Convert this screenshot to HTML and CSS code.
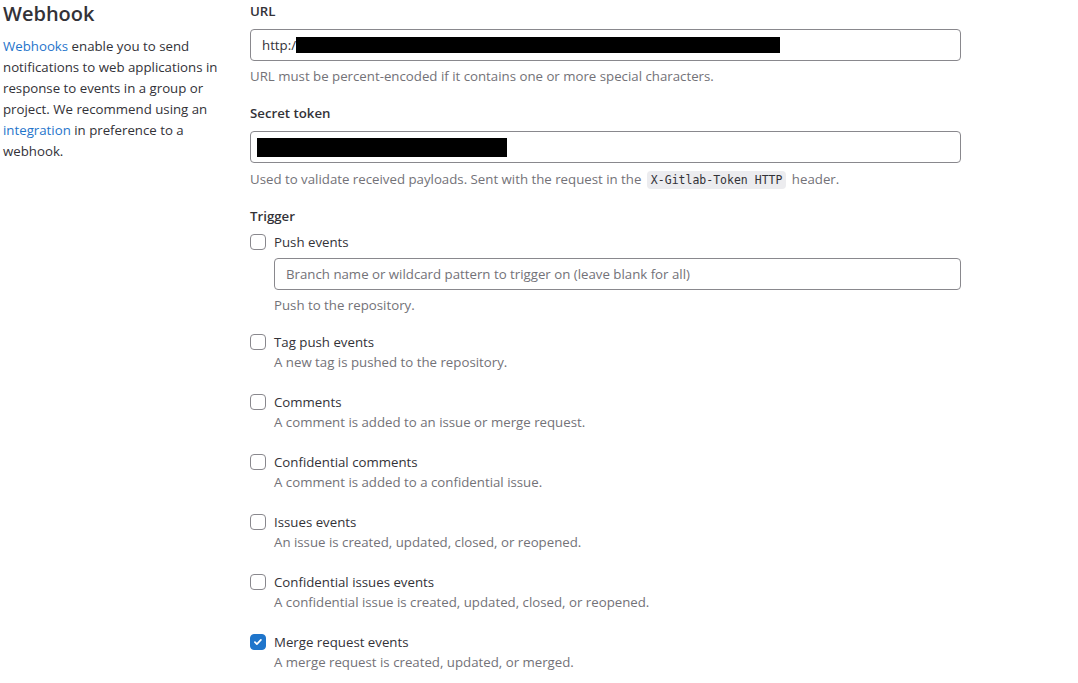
FILE: index.html
```html
<!DOCTYPE html>
<html lang="en">
<head>
<meta charset="utf-8">
<title>Webhook</title>
<link rel="stylesheet" href="styles.css">
</head>
<body>
<div class="page">
  <aside class="intro">
    <h2 class="title">Webhook</h2>
    <p class="desc"><a href="#">Webhooks</a> enable you to send notifications to web applications in response to events in a group or project. We recommend using an <a href="#">integration</a> in preference to a webhook.</p>
  </aside>
  <main class="form">
    <div class="group">
      <label class="label">URL</label>
      <div class="input"><span class="val">http:/</span><span class="redact redact-url"></span></div>
      <p class="help">URL must be percent-encoded if it contains one or more special characters.</p>
    </div>
    <div class="group group-token">
      <label class="label">Secret token</label>
      <div class="input input-secret"><span class="redact redact-token"></span></div>
      <p class="help help-token">Used to validate received payloads. Sent with the request in the <code>X-Gitlab-Token HTTP</code> header.</p>
    </div>
    <div class="group trigger">
      <label class="label">Trigger</label>
      <div class="check first">
        <span class="box"></span>
        <div class="check-body">
          <div class="check-label">Push events</div>
          <div class="input input-branch"><span class="placeholder">Branch name or wildcard pattern to trigger on (leave blank for all)</span></div>
          <p class="help help-push">Push to the repository.</p>
        </div>
      </div>
      <div class="check after-push">
        <span class="box"></span>
        <div class="check-body">
          <div class="check-label">Tag push events</div>
          <div class="check-help">A new tag is pushed to the repository.</div>
        </div>
      </div>
      <div class="check">
        <span class="box"></span>
        <div class="check-body">
          <div class="check-label">Comments</div>
          <div class="check-help">A comment is added to an issue or merge request.</div>
        </div>
      </div>
      <div class="check">
        <span class="box"></span>
        <div class="check-body">
          <div class="check-label">Confidential comments</div>
          <div class="check-help">A comment is added to a confidential issue.</div>
        </div>
      </div>
      <div class="check">
        <span class="box"></span>
        <div class="check-body">
          <div class="check-label">Issues events</div>
          <div class="check-help">An issue is created, updated, closed, or reopened.</div>
        </div>
      </div>
      <div class="check">
        <span class="box"></span>
        <div class="check-body">
          <div class="check-label">Confidential issues events</div>
          <div class="check-help">A confidential issue is created, updated, closed, or reopened.</div>
        </div>
      </div>
      <div class="check">
        <span class="box checked"><svg viewBox="0 0 16 16" width="16" height="16"><path d="M4.5 8.2l2.2 2.1 4.6-4.6" fill="none" stroke="#fff" stroke-width="2" stroke-linecap="round" stroke-linejoin="round"/></svg></span>
        <div class="check-body">
          <div class="check-label">Merge request events</div>
          <div class="check-help">A merge request is created, updated, or merged.</div>
        </div>
      </div>
    </div>
  </main>
</div>
</body>
</html>
```
FILE: styles.css
```css
* { box-sizing: border-box; }
html, body { margin: 0; padding: 0; background: #fff; }
body {
  font-family: "Open Sans", "Noto Sans", sans-serif;
  font-size: 13.25px;
  line-height: 20px;
  color: #333238;
}
.page {
  display: grid;
  grid-template-columns: 222px 711px;
  column-gap: 25px;
  padding-left: 3px;
}
.title {
  margin: 0;
  font-size: 20px;
  line-height: 28px;
  font-weight: 600;
  color: #333238;
}
.desc {
  margin: 8px 0 0;
  line-height: 21px;
}
.desc a { color: #1f75cb; text-decoration: none; }
.form { padding-top: 1px; }
.label {
  display: block;
  font-weight: 600;
  line-height: 20px;
}
.group { margin-bottom: 17px; }
.group.group-token { margin-bottom: 16px; }
.input {
  margin-top: 8px;
  height: 32px;
  border: 1px solid #89888d;
  border-radius: 4px;
  display: flex;
  align-items: center;
  padding: 0 11px;
}
.val { color: #333238; }
.redact { display: block; background: #000; height: 16px; }
.redact-url { width: 484px; }
.input-secret { padding-left: 6px; }
.redact-token { width: 250px; height: 19px; }
.help {
  margin: 5px 0 0;
  color: #737278;
}
.help-token { margin-top: 6px; }
code {
  font-family: "DejaVu Sans Mono", "Liberation Mono", monospace;
  font-size: 11.5px;
  background: #ececef;
  color: #333238;
  border-radius: 4px;
  padding: 2px 4px;
  margin: 0 2px;
}
.trigger .label { margin-bottom: 6px; }
.check {
  display: flex;
  gap: 8px;
  margin-top: 20px;
}
.check.first { margin-top: 0; }
.check.after-push { margin-top: 17px; }
.box {
  flex: none;
  width: 16px;
  height: 16px;
  margin-top: 2px;
  border: 1px solid #89888d;
  border-radius: 4px;
  background: #fff;
}
.box.checked {
  background: #1f75cb;
  border-color: #1f75cb;
  display: flex;
  align-items: center;
  justify-content: center;
}
.box.checked svg { width: 14px; height: 14px; }
.check-body { flex: 1; }
.check-label { line-height: 20px; }
.check-help { color: #737278; line-height: 20px; }
.input-branch { margin-top: 6px; }
.placeholder { color: #737278; }
.help-push { margin-top: 5px; }
```
